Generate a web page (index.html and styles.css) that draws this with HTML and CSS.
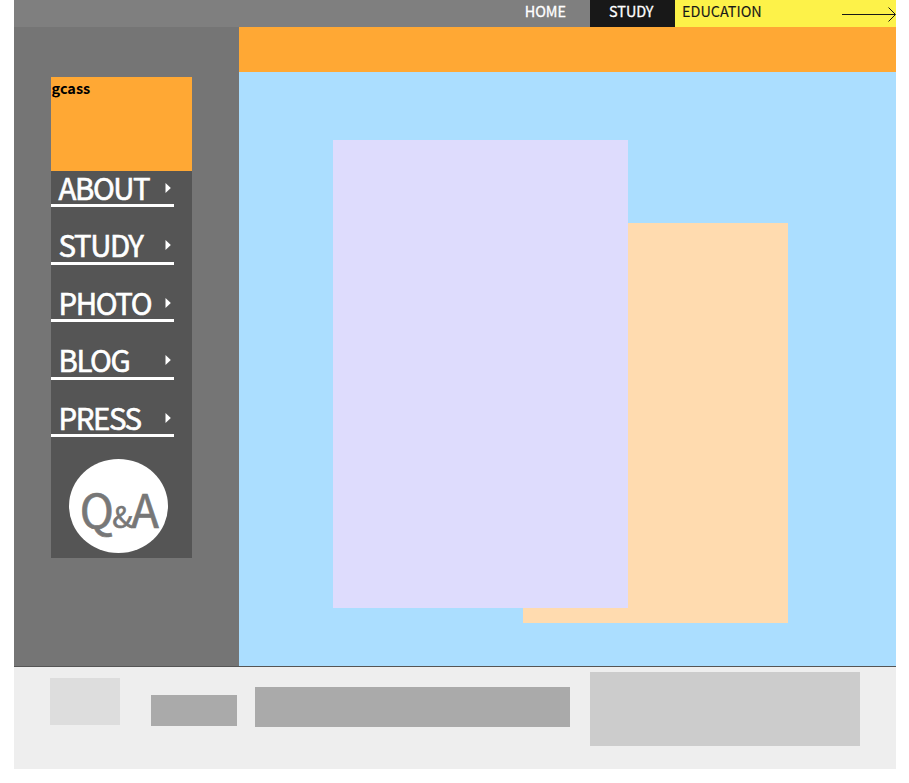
FILE: index.html
```html
<!DOCTYPE html>
<html lang="ko">
<head>
<meta charset="utf-8">
<title>gcass</title>
<link rel="stylesheet" href="styles.css">
</head>
<body>
<div class="page">
  <nav class="topbar">
    <a class="crumb home">HOME</a>
    <a class="crumb current">STUDY</a>
    <a class="crumb section">
      <span class="section-label">EDUCATION</span>
      <svg class="arrow" width="55" height="16" viewBox="0 0 55 16"><path d="M1 8.5H54M47.5 1.5L54.5 8.5L47.5 15.5" fill="none" stroke="#181818" stroke-width="1"/></svg>
    </a>
  </nav>
  <div class="body">
    <aside class="sidebar">
      <div class="panel">
        <h1 class="logo">gcass</h1>
        <ul class="menu">
          <li><span>ABOUT</span><svg width="6" height="10" viewBox="0 0 6 10"><path d="M.5 0L5.8 5L.5 10Z"/></svg></li>
          <li><span>STUDY</span><svg width="6" height="10" viewBox="0 0 6 10"><path d="M.5 0L5.8 5L.5 10Z"/></svg></li>
          <li><span>PHOTO</span><svg width="6" height="10" viewBox="0 0 6 10"><path d="M.5 0L5.8 5L.5 10Z"/></svg></li>
          <li><span>BLOG</span><svg width="6" height="10" viewBox="0 0 6 10"><path d="M.5 0L5.8 5L.5 10Z"/></svg></li>
          <li><span>PRESS</span><svg width="6" height="10" viewBox="0 0 6 10"><path d="M.5 0L5.8 5L.5 10Z"/></svg></li>
        </ul>
        <div class="qna"><span>Q<small>&amp;</small>A</span></div>
      </div>
    </aside>
    <main class="content">
      <div class="banner"></div>
      <div class="stage">
        <div class="card back"></div>
        <div class="card front"></div>
      </div>
    </main>
  </div>
  <footer class="footer">
    <div class="mark"></div>
    <div class="links"></div>
    <div class="address"></div>
    <div class="partners"></div>
  </footer>
</div>
</body>
</html>
```
FILE: styles.css
```css
* { box-sizing: border-box; margin: 0; padding: 0; }
body {
  background: #fff;
  font-family: "Noto Sans CJK KR", sans-serif;
}
.page { width: 882px; height: 769px; margin-left: 14px; }

.topbar {
  display: flex;
  justify-content: flex-end;
  height: 27px;
  background: #7f7f7f;
  color: #fff;
  font-size: 14.4px;
  line-height: 22px;
}
.crumb { height: 27px; }
.home { padding-right: 24px; -webkit-text-stroke: .3px; }
.current { width: 85px; padding-left: 19px; background: #181818; -webkit-text-stroke: .3px; }
.section {
  display: flex;
  justify-content: space-between;
  width: 221px;
  padding-left: 7px;
  background: #fdf249;
  color: #181818;
  -webkit-text-stroke: .1px;
}
.arrow { margin-top: 6px; }

.body { display: flex; height: 639px; }
.sidebar { width: 225px; padding: 50px 0 0 37px; background: #757575; }
.panel { width: 141px; height: 481px; background: #555; }
.logo {
  height: 94px;
  background: #ffa834;
  color: #000;
  font-size: 14.5px;
  line-height: 22px;
  padding-left: .5px;
}
.menu { width: 123px; list-style: none; }
.menu li {
  display: flex;
  height: 36px;
  margin-bottom: 21.5px;
  padding: 0 3px 0 7.5px;
  justify-content: space-between;
  border-bottom: 3px solid #fff;
  color: #fff;
  font-size: 29.4px;
  line-height: 33px;
  letter-spacing: -1.4px;
  -webkit-text-stroke: .6px;
}
.menu li:nth-child(even) span { margin-top: -.6px; }
.menu svg { margin-top: 11.8px; fill: #fff; }
.qna {
  display: flex;
  justify-content: center;
  width: 99px;
  height: 94px;
  margin: 1px 0 0 18px;
  border-radius: 50%;
  background: #fff;
  color: #777;
  font-size: 46px;
  line-height: 98px;
  letter-spacing: -1.6px;
  white-space: nowrap;
  -webkit-text-stroke: .6px;
}
.qna small { font-size: 30px; }

.content { flex: 1; background: #abdeff; }
.banner { height: 45px; background: #ffa834; }
.stage { display: grid; padding: 68px 0 0 94px; }
.card { grid-area: 1 / 1; }
.front { width: 295px; height: 468px; background: #dedcfd; }
.back { width: 265px; height: 400px; margin: 83px 0 0 190px; background: #ffdbaf; }

.footer {
  display: flex;
  align-items: flex-start;
  height: 103px;
  padding-left: 36px;
  border-top: 1px solid #555;
  background: #eee;
}
.mark { width: 70px; height: 47px; margin-top: 11px; background: #ddd; }
.links { width: 86px; height: 31px; margin: 28px 0 0 31px; background: #aaa; }
.address { width: 315px; height: 40px; margin: 20px 0 0 18px; background: #aaa; }
.partners { width: 270px; height: 74px; margin: 5px 0 0 20px; background: #ccc; }
```
